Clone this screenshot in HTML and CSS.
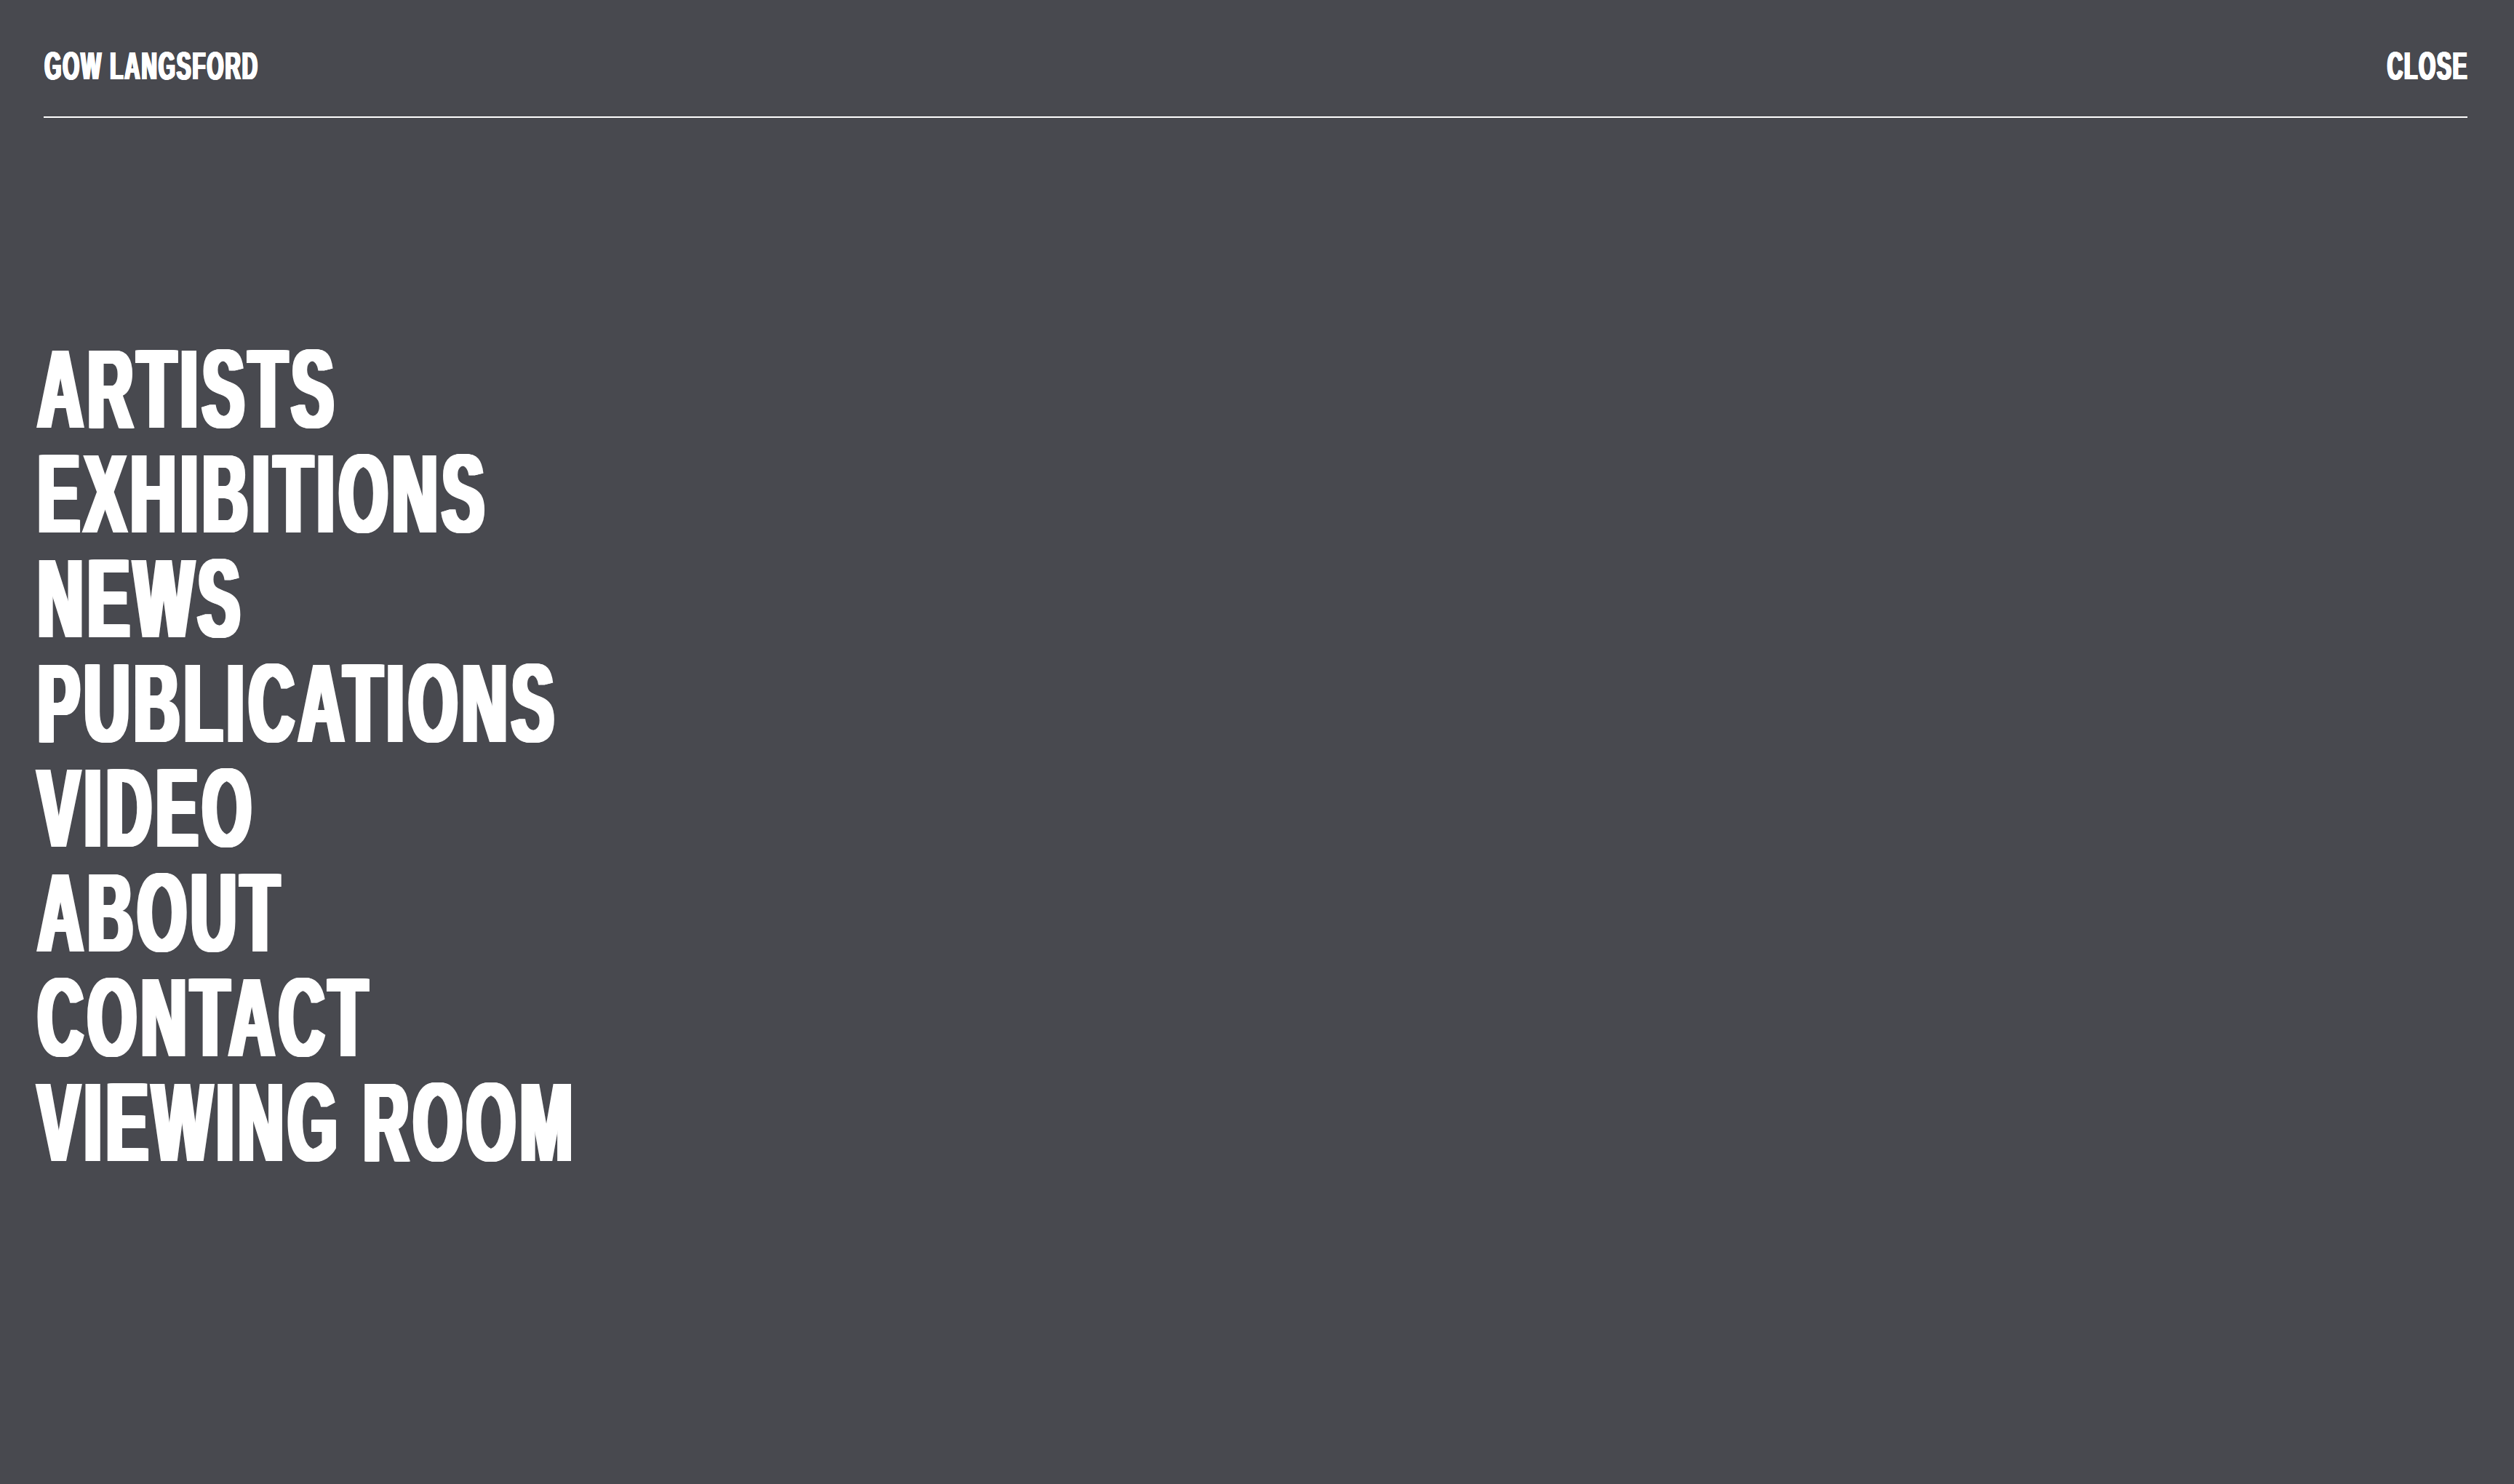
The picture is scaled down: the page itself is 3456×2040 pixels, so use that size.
FILE: index.html
```html
<!DOCTYPE html>
<html lang="en">
<head>
<meta charset="utf-8">
<title>Gow Langsford</title>
<link rel="stylesheet" href="styles.css">
</head>
<body>
<div class="overlay">
  <header class="topbar">
    <a class="brand" href="#"><span class="ink ink-left ink-small">GOW LANGSFORD</span></a>
    <a class="close" href="#"><span class="ink ink-right ink-small">CLOSE</span></a>
  </header>
  <nav class="menu">
    <a class="menu-item" href="#"><span class="ink ink-left">ARTISTS</span></a>
    <a class="menu-item" href="#"><span class="ink ink-left">EXHIBITIONS</span></a>
    <a class="menu-item" href="#"><span class="ink ink-left">NEWS</span></a>
    <a class="menu-item" href="#"><span class="ink ink-left">PUBLICATIONS</span></a>
    <a class="menu-item" href="#"><span class="ink ink-left">VIDEO</span></a>
    <a class="menu-item" href="#"><span class="ink ink-left">ABOUT</span></a>
    <a class="menu-item" href="#"><span class="ink ink-left">CONTACT</span></a>
    <a class="menu-item" href="#"><span class="ink ink-left">VIEWING ROOM</span></a>
  </nav>
</div>
</body>
</html>
```
FILE: styles.css
```css
html, body {
  margin: 0;
  padding: 0;
  background: #48494f;
  height: 100%;
}
body {
  font-family: "Liberation Sans", Arial, sans-serif;
  font-weight: 700;
  color: #ffffff;
  overflow: hidden;
}
a {
  color: #ffffff;
  text-decoration: none;
}
.overlay {
  min-height: 100vh;
}
.topbar {
  display: flex;
  justify-content: space-between;
  align-items: flex-start;
  margin: 0 64px 0 60px;
  padding: 64px 0 43px;
  border-bottom: 2px solid #ffffff;
  font-size: 53px;
  line-height: 53px;
}
.brand, .close {
  display: block;
  white-space: nowrap;
}
.menu {
  display: flex;
  flex-direction: column;
  align-items: flex-start;
  margin-top: 301px;
  padding-left: 48px;
  font-size: 154px;
  line-height: 144px;
}
.menu-item {
  display: block;
  white-space: nowrap;
}
/* condensed heavy grotesque look: squeeze horizontally and thicken stems */
.ink {
  display: inline-block;
  letter-spacing: 0.07em;
  transform: scaleX(0.562);
  text-shadow:
    0.01em 0 #fff, 0.02em 0 #fff, 0.03em 0 #fff, 0.04em 0 #fff,
    0.05em 0 #fff, 0.06em 0 #fff, 0.07em 0 #fff, 0.08em 0 #fff,
    0.09em 0 #fff;
}
.ink-small {
  transform: scaleX(0.555);
}
.ink-left {
  transform-origin: 0 0;
}
.ink-right {
  transform-origin: 100% 0;
}
```
